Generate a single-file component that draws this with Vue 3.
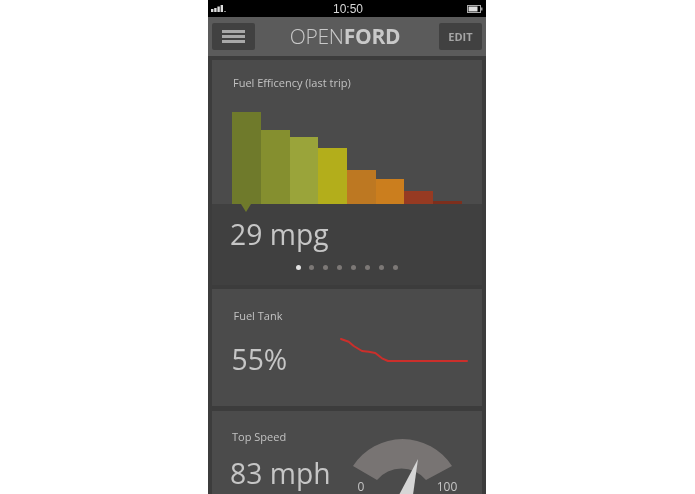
<script setup>
const bars = [
  { h: 92, c: '#6f7a2b', w: 29 },
  { h: 74, c: '#858f2f', w: 29 },
  { h: 67, c: '#9aa43a', w: 28 },
  { h: 56, c: '#b3ae1b', w: 29 },
  { h: 34, c: '#bd7822', w: 29 },
  { h: 25, c: '#cb7e1e', w: 28 },
  { h: 13, c: '#963a22', w: 29 },
  { h: 3, c: '#7d2f1d', w: 29 }
]
const dots = [0, 1, 2, 3, 4, 5, 6, 7]
</script>

<template>
  <div class="page">
    <div class="phone">
      <header class="status">
        <svg class="signal" width="16" height="9" viewBox="0 0 16 9">
          <rect x="0" y="5" width="2.4" height="3" fill="#ddd" />
          <rect x="3.2" y="4" width="2.4" height="4" fill="#ddd" />
          <rect x="6.4" y="2.5" width="2.4" height="5.5" fill="#ddd" />
          <rect x="9.6" y="1" width="2.4" height="7" fill="#ddd" />
          <rect x="13" y="7" width="2" height="1" fill="#888" />
        </svg>
        <span class="time">10:50</span>
        <svg class="battery" width="16" height="8" viewBox="0 0 16 8">
          <rect x="0.5" y="0.5" width="13" height="7" fill="none" stroke="#aaa" />
          <rect x="1.5" y="1.5" width="9" height="5" fill="#ddd" />
          <rect x="14" y="2.5" width="1.5" height="3" fill="#999" />
        </svg>
      </header>

      <nav class="nav">
        <button class="navbtn menu">
          <span></span><span></span><span></span>
        </button>
        <div class="brand"><span class="thin">OPEN</span><b>FORD</b></div>
        <button class="navbtn edit">EDIT</button>
      </nav>

      <main class="cards">
        <section class="card efficiency">
          <h2 class="label label-first">Fuel Efficency (last trip)</h2>
          <div class="chart">
            <div
              v-for="(b, i) in bars"
              :key="i"
              class="bar"
              :style="{ height: b.h + 'px', background: b.c, width: b.w + 'px' }"
            ></div>
          </div>
          <div class="panel">
            <i class="pointer"></i>
            <div class="big">29 mpg</div>
            <div class="dots">
              <span v-for="d in dots" :key="d" class="dot" :class="{ on: d === 0 }"></span>
            </div>
          </div>
        </section>

        <section class="card tank">
          <div class="col">
            <h2 class="label">Fuel Tank</h2>
            <div class="big pct">55%</div>
          </div>
          <svg class="spark" width="130" height="26" viewBox="0 0 130 26">
            <path
              d="M1 1 L8.7 3.7 L13.7 8 L22 13 L28.7 13.7 L35.3 15 L42 20.3 L48 23 L127 23"
              fill="none"
              stroke="#cb2f2b"
              stroke-width="2"
              stroke-linejoin="round"
              stroke-linecap="round"
            />
          </svg>
        </section>

        <section class="card speed">
          <div class="col">
            <h2 class="label">Top Speed</h2>
            <div class="big mph">83 mph</div>
          </div>
          <svg class="gauge" width="110" height="58" viewBox="0 0 110 58">
            <path d="M4 29 A59 59 0 0 1 103 29 L77 43 A32 32 0 0 0 28 43 Z" fill="#787473" />
            <path d="M69 22 L50 58 L64 58 Z" fill="#d6d6d6" />
            <text x="12" y="52.5" class="tick" text-anchor="middle">0</text>
            <text x="98" y="52.5" class="tick" text-anchor="middle">100</text>
          </svg>
        </section>
      </main>
    </div>
  </div>
</template>

<style>
html, body { margin: 0; background: #fff; overflow: hidden; }
</style>

<style scoped>
.page {
  display: flex;
  box-sizing: border-box;
  padding-left: 208px;
  width: 695px;
  height: 494px;
  overflow: hidden;
  background: #fff;
  font-family: "Open Sans", "Liberation Sans", sans-serif;
}
.phone {
  width: 278px;
  height: 494px;
  overflow: hidden;
  background: #3c3c3c;
  display: flex;
  flex-direction: column;
  flex: none;
  filter: blur(0.35px);
}
.status {
  height: 17px;
  flex: none;
  background: #000;
  display: flex;
  align-items: center;
  justify-content: space-between;
  padding: 0 3px;
  position: relative;
}
.time {
  color: #d8d8d8;
  font: 400 12px "Liberation Sans", sans-serif;
  margin-left: 2px;
}
.nav {
  height: 39px;
  flex: none;
  background: #5b5b5b;
  display: flex;
  align-items: center;
  justify-content: space-between;
  padding: 0 4px;
  box-sizing: border-box;
}
.navbtn {
  width: 43px;
  height: 27px;
  background: #414141;
  border: 0;
  border-radius: 2px;
  padding: 0;
  display: flex;
  flex-direction: column;
  align-items: center;
  justify-content: center;
}
.menu { gap: 2px; }
.menu span {
  display: block;
  width: 23px;
  height: 3px;
  background: #a8a8a8;
}
.edit {
  color: #a5a5a5;
  font: 700 11px "Open Sans", sans-serif;
}
.brand {
  color: #c9c9c9;
  font-size: 21px;
  letter-spacing: -0.25px;
  line-height: 1;
  margin-right: 4px;
}
.thin { font-weight: 300; }
.brand b { font-weight: 700; }
.cards {
  display: flex;
  flex-direction: column;
  gap: 4px;
  padding: 4px 4px 0;
}
.card {
  background: #4b4b4b;
  flex: none;
}
.label {
  margin: 0;
  color: #c2c2c2;
  font-size: 11px;
  font-weight: 400;
  line-height: 15px;
}
.efficiency { height: 225px; display: flex; flex-direction: column; }
.label-first { padding: 14.5px 0 0 21px; }
.chart {
  display: flex;
  align-items: flex-end;
  height: 114.5px;
  padding-left: 20px;
}
.bar { flex: none; }
.panel {
  position: relative;
  flex: 1;
  background: #404040;
  padding: 10px 0 0 18px;
}
.pointer {
  position: absolute;
  left: 29px;
  top: 0;
  border-left: 5px solid transparent;
  border-right: 5px solid transparent;
  border-top: 8px solid #6f7a2b;
}
.big {
  color: #c6c6c6;
  font-size: 28.3px;
  font-weight: 400;
  line-height: 40px;
}
.dots {
  display: flex;
  gap: 8.9px;
  padding-left: 65.5px;
  margin-top: 11px;
}
.dot {
  width: 5px;
  height: 5px;
  border-radius: 50%;
  background: #7c7876;
}
.dot.on { background: #e2e2e2; }
.tank {
  height: 117px;
  display: flex;
  position: relative;
}
.col { padding: 19px 0 0 21.5px; width: 77px; }
.pct { margin: 15.5px 0 0 -2px; }
.spark {
  margin: 48.5px 0 0 29px;
  flex: none;
}
.speed {
  height: 90px;
  display: flex;
  margin-top: 1px;
}
.speed .col { padding: 18px 0 0 20px; width: 111px; }
.mph { margin: 9px 0 0 -2px; }
.gauge {
  flex: none;
  margin: 26px 0 0 6px;
}
.tick {
  fill: #c6c6c6;
  font-size: 12px;
  font-family: "Open Sans", sans-serif;
  transform: translateY(1px);
}
</style>
